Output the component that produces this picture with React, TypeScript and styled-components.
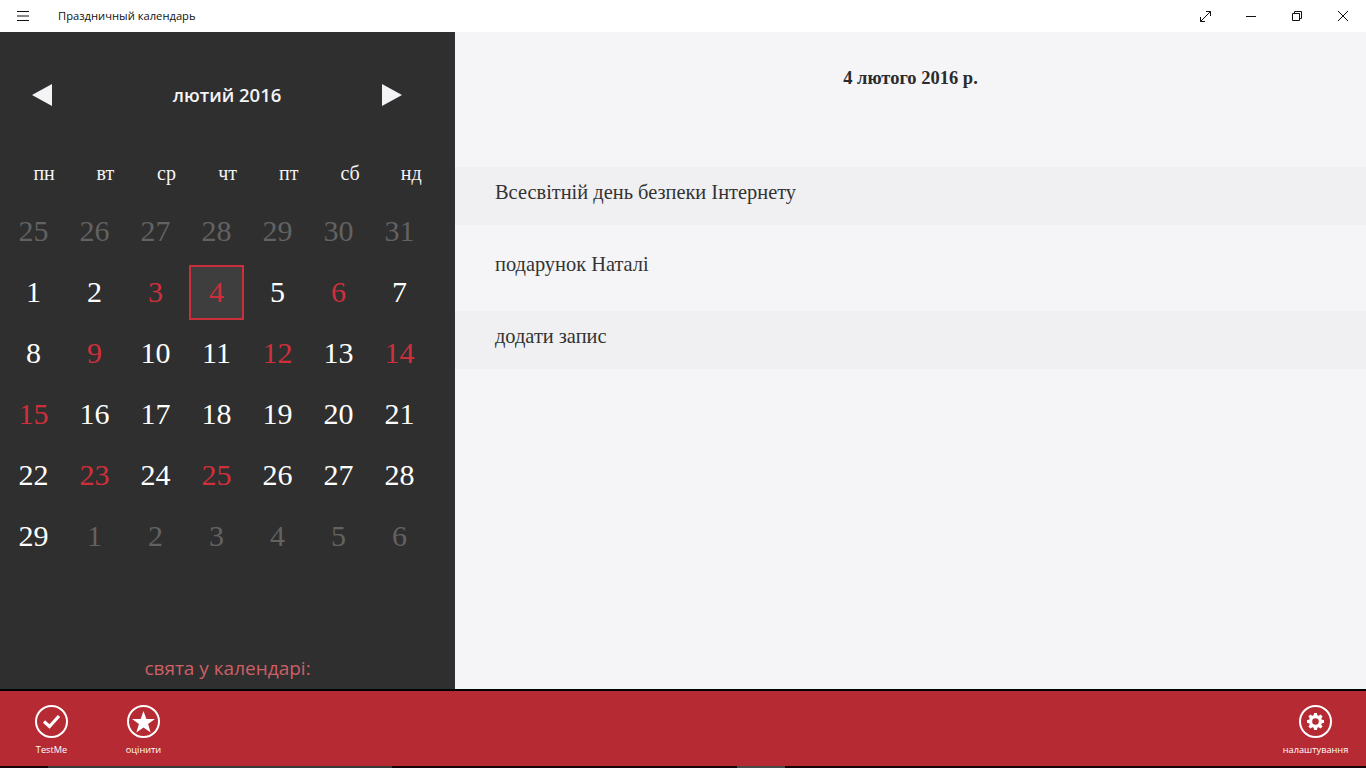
import React from 'react';
import styled, { createGlobalStyle } from 'styled-components';

const Global = createGlobalStyle`
  html, body { margin: 0; padding: 0; width: 1366px; height: 768px; overflow: hidden; background: #000; }
  * { box-sizing: border-box; }
`;
const SANS = `"Open Sans", "Noto Sans", sans-serif`;
const SERIF = `"Liberation Serif", serif`;

const Page = styled.div`
  width: 1366px; height: 768px; display: flex; flex-direction: column; background: #000;
`;
const TitleBar = styled.header`
  height: 32px; background: #fff; display: flex; align-items: center; flex: none;
`;
const MenuButton = styled.div`
  width: 48px; height: 32px; display: flex; align-items: center; justify-content: center; padding-right: 2px;
`;
const AppTitle = styled.div`
  margin-left: 10px; margin-top: -2px; font: 400 11.2px ${SANS}; color: #111; flex: 1;
`;
const WinButtons = styled.div`display: flex; height: 32px;`;
const WinButton = styled.div`
  width: 46px; height: 32px; display: flex; align-items: center; justify-content: center;
`;
const Main = styled.div`display: flex; height: 657px; flex: none;`;
const Side = styled.aside`
  width: 455px; background: #2f2f2f; display: flex; flex-direction: column; padding: 0 0 0 3px;
`;
const MonthRow = styled.div`
  height: 61px; margin-top: 32px; display: flex; align-items: center; justify-content: space-between; padding: 0 53px 0 29px;
`;
const Month = styled.div`
  font: 600 18.5px ${SANS}; color: #f4f4f6; margin-left: 20px;
`;
const Week = styled.div`
  display: grid; grid-template-columns: repeat(7, 61.2px); margin: 34px 0 0 10.5px; height: 28px; align-items: center;
`;
const WeekDay = styled.div`
  text-align: center; font: 400 20px ${SERIF}; color: #f4f4f6;
`;
const Days = styled.div`
  display: grid; grid-template-columns: repeat(7, 61px); grid-auto-rows: 61px; margin-top: 14px;
`;
const Day = styled.div<{ $tone: 'normal' | 'red' | 'dim'; $selected?: boolean }>`
  margin: 3px; padding-bottom: 2px; display: flex; align-items: center; justify-content: center;
  font: 400 30px ${SERIF};
  color: ${p => (p.$tone === 'red' ? '#cf2f3b' : p.$tone === 'dim' ? '#626262' : '#fff')};
  ${p => p.$selected && `background: #3e3e3e; border: 2px solid #c9303b;`}
`;
const Holidays = styled.div`
  margin-top: auto; height: 42px; text-align: center; margin-left: -3px;
  font: 400 19px ${SANS}; color: #cd5f66; line-height: 42px;
`;
const Content = styled.main`
  flex: 1; background: #f5f5f8; display: flex; flex-direction: column;
`;
const DateTitle = styled.h1`
  margin: 33px 0 0; height: 102px; text-align: center; font: 700 18.5px/26px ${SERIF}; color: #2b2b2b;
`;
const Row = styled.div<{ $shade?: boolean }>`
  height: 58px; margin-bottom: 14px; padding: 0 0 8px 40px; display: flex; align-items: center;
  font: 400 20.4px ${SERIF}; color: #333;
  background: ${p => (p.$shade ? '#f0f0f2' : 'transparent')};
`;
const Divider = styled.div`height: 2px; background: #000; flex: none;`;
const AppBar = styled.footer`
  height: 75px; background: #b52a33; display: flex; justify-content: space-between; flex: none;
`;
const BarGroup = styled.div`display: flex;`;
const BarButton = styled.div<{ $w: number }>`
  width: ${p => p.$w}px; display: flex; flex-direction: column; align-items: center; padding-top: 14px;
`;
const BarCircle = styled.div`
  width: 33px; height: 33px; border: 2px solid #fff; border-radius: 50%; display: flex; align-items: center; justify-content: center;
`;
const BarLabel = styled.div`
  margin-top: 5px; font: 400 9.2px/14px ${SANS}; color: #fff; white-space: nowrap;
`;
const Strip = styled.div`
  height: 2px; background: #170407; display: flex; flex: none;
`;
const StripPiece = styled.div<{ $x: number; $w: number; $c: string }>`
  margin-left: ${p => p.$x}px; width: ${p => p.$w}px; background: ${p => p.$c};
`;

const weeks: [string, 'normal' | 'red' | 'dim'][] = [
  ...['25','26','27','28','29','30','31'].map(d => [d, 'dim'] as [string, 'dim']),
  ...Array.from({ length: 29 }, (_, i) => {
    const n = i + 1;
    return [String(n), [3,4,6,9,12,14,15,23,25].includes(n) ? 'red' : 'normal'] as [string, 'normal' | 'red'];
  }),
  ...['1','2','3','4','5','6'].map(d => [d, 'dim'] as [string, 'dim']),
];

export default function App() {
  return (
    <Page>
      <Global />
      <TitleBar>
        <MenuButton>
          <svg width="12" height="10" viewBox="0 0 12 10" stroke="#111" strokeWidth="1"><path d="M0 .5h12M0 5h12M0 9.5h12" /></svg>
        </MenuButton>
        <AppTitle>Праздничный календарь</AppTitle>
        <WinButtons>
          <WinButton>
            <svg width="11" height="11" viewBox="0 0 11 11" fill="none" stroke="#111"><path d="M.5 10.5l10-10M6 .5h4.5V5M.5 6v4.5H5" /></svg>
          </WinButton>
          <WinButton>
            <svg width="10" height="1" viewBox="0 0 10 1" stroke="#111"><path d="M0 .5h10" /></svg>
          </WinButton>
          <WinButton>
            <svg width="10" height="10" viewBox="0 0 10 10" fill="none" stroke="#111"><path d="M.5 2.5h7v7h-7zM2.5 2.5v-2h7v7h-2" /></svg>
          </WinButton>
          <WinButton>
            <svg width="10" height="10" viewBox="0 0 10 10" fill="none" stroke="#111"><path d="M0 0l10 10M10 0L0 10" /></svg>
          </WinButton>
        </WinButtons>
      </TitleBar>
      <Main>
        <Side>
          <MonthRow>
            <svg width="20" height="22" viewBox="0 0 20 22"><path d="M0 11L20 0v22z" fill="#f4f4f6" /></svg>
            <Month>лютий 2016</Month>
            <svg width="20" height="22" viewBox="0 0 20 22"><path d="M20 11L0 0v22z" fill="#f4f4f6" /></svg>
          </MonthRow>
          <Week>
            {['пн','вт','ср','чт','пт','сб','нд'].map(d => <WeekDay key={d}>{d}</WeekDay>)}
          </Week>
          <Days>
            {weeks.map(([d, tone], i) => (
              <Day key={i} $tone={tone} $selected={i === 10}>{d}</Day>
            ))}
          </Days>
          <Holidays>свята у календарі:</Holidays>
        </Side>
        <Content>
          <DateTitle>4 лютого 2016 р.</DateTitle>
          <Row $shade>Всесвітній день безпеки Інтернету</Row>
          <Row>подарунок Наталі</Row>
          <Row $shade>додати запис</Row>
        </Content>
      </Main>
      <Divider />
      <AppBar>
        <BarGroup>
          <BarButton $w={103}>
            <BarCircle>
              <svg width="19" height="15" viewBox="0 0 19 15" fill="none" stroke="#fff" strokeWidth="3.2"><path d="M2 7.5l5.5 5L17 2" /></svg>
            </BarCircle>
            <BarLabel>TestMe</BarLabel>
          </BarButton>
          <BarButton $w={81}>
            <BarCircle>
              <svg width="23" height="22" viewBox="0 0 24 23" fill="#fff"><path d="M12 0l3 8.3h9l-7.2 5.4 2.7 8.8L12 17.2l-7.5 5.3 2.7-8.8L0 8.3h9z" /></svg>
            </BarCircle>
            <BarLabel>оцінити</BarLabel>
          </BarButton>
        </BarGroup>
        <BarButton $w={101}>
          <BarCircle>
            <svg width="17" height="17" viewBox="0 0 18 18" fill="#fff"><path fillRule="evenodd" d="M7.5 0h3l.4 2.4 1.5.6 2-1.4 2.1 2.1-1.4 2 .6 1.5L18 7.5v3l-2.3.4-.6 1.5 1.4 2-2.1 2.1-2-1.4-1.5.6-.4 2.3h-3l-.4-2.3-1.5-.6-2 1.4-2.1-2.1 1.4-2-.6-1.5L0 10.5v-3l2.3-.4.6-1.5-1.4-2 2.1-2.1 2 1.4 1.5-.6zM9 5.5a3.5 3.5 0 100 7 3.5 3.5 0 000-7z" /></svg>
          </BarCircle>
          <BarLabel>налаштування</BarLabel>
        </BarButton>
      </AppBar>
      <Strip>
        <StripPiece $x={48} $w={344} $c="#3a3a3a" />
        <StripPiece $x={345} $w={48} $c="#4a4a4a" />
      </Strip>
    </Page>
  );
}
